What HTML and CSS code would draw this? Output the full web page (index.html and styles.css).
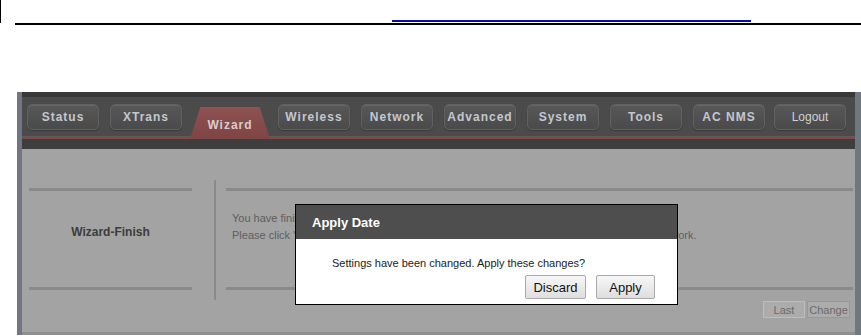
FILE: index.html
```html
<!DOCTYPE html>
<html lang="en">
<head>
  <meta charset="UTF-8">
  <title>Wizard - Finish</title>
  <link rel="stylesheet" href="styles.css">
</head>
<body>
<div class="top">
  <span class="top-link"></span>
</div>
<div class="top-rule"></div>

<div class="frame">
  <!-- NAV -->
  <div class="nav">
    <div class="tabs">
      <button class="tab">Status</button>
      <button class="tab">XTrans</button>
      <button class="tab active">Wizard</button>
      <button class="tab">Wireless</button>
      <button class="tab">Network</button>
      <button class="tab">Advanced</button>
      <button class="tab">System</button>
      <button class="tab">Tools</button>
      <button class="tab">AC NMS</button>
      <button class="tab logout">Logout</button>
    </div>
    <div class="nav-line"></div>
  </div>

  <!-- CONTENT -->
  <div class="content">
    <div class="side">Wizard-Finish</div>
    <div class="divider"></div>
    <div class="main">
      <div class="panel">
        <p>You have finished the wizard settings.</p>
        <p>Please click "Change" to save the settings, and the device will restart to connect to the network.</p>
      </div>
      <div class="actions">
        <button class="small-btn">Last</button>
        <button class="small-btn focus">Change</button>
      </div>
    </div>
  </div>
</div>

<!-- DIALOG -->
<div class="dialog">
  <div class="dialog-head">Apply Date</div>
  <div class="dialog-body">
    <p>Settings have been changed. Apply these changes?</p>
    <div class="dialog-btns">
      <button class="dlg-btn">Discard</button>
      <button class="dlg-btn">Apply</button>
    </div>
  </div>
</div>
</body>
</html>
```

FILE: styles.css
```css
*{box-sizing:border-box;margin:0;padding:0}
body{background:#fff;font-family:'Liberation Sans',Arial,sans-serif;width:861px;height:336px;overflow:hidden;position:relative}
button{font-family:inherit;cursor:pointer}

/* top strip */
.top{height:23px;border-left:1px solid #000;display:flex;align-items:flex-end}
.top-link{display:block;margin-left:391px;width:359px;height:0;border-bottom:2px solid #0b0bb4;margin-bottom:1px}
.top-rule{margin-left:15px;border-top:2px solid #000}

/* frame */
.frame{margin:67px 0 0 17px;width:844px;border-left:5px solid #6f7780;border-right:6px solid #6f7780}

/* nav */
.nav{background:#3e3e3e}
.tabs{height:44px;border-top:5px solid #383838;background:#4b4b4b;padding:7px 0 0 5px;display:flex;align-items:flex-start;gap:11px}
.tab{width:72px;height:26px;border:1px solid #616161;border-radius:5px;background:linear-gradient(#585858,#4a4a4a);color:#c3c7cf;font-size:12px;font-weight:bold;letter-spacing:1px;box-shadow:inset 0 1px 0 #666,0 1px 1px #3a3a3a}
.tab.active{align-self:flex-end;width:80px;height:32px;margin:0 -3px -3px;border:none;border-radius:0;position:relative;z-index:1;background:linear-gradient(#8f5252,#7f4444);clip-path:polygon(13% 0,87% 0,100% 100%,0 100%);color:#d6cdcd;padding-top:3px}
.tab.logout{font-weight:normal;letter-spacing:0;font-size:12px;color:#d0d2d6;margin-left:-2px}
.nav-line{height:13px;border-top:1px solid #5c5c5c;box-shadow:inset 0 2px 0 #874646}

/* content */
.content{background:#a3a3a3;height:186px;border-bottom:3px solid #8f8f8f;display:flex;align-items:flex-start;padding:39px 2px 0 7px}
.side{width:163px;height:102px;border-top:3px solid #8a8a8a;border-bottom:3px solid #8a8a8a;padding-top:34px;text-align:center;line-height:14px;font-size:12px;font-weight:bold;color:#3c3c3c}
.divider{width:2px;height:120px;margin:-8px 10px 0 22px;background:#8a8a8a}
.main{flex:1}
.panel{height:102px;border-top:3px solid #8a8a8a;border-bottom:3px solid #8a8a8a;padding:19px 6px 0;font-size:11px;color:#5e5e5e;line-height:17px}
.actions{display:flex;justify-content:flex-end;gap:2px;margin-top:11px;padding-right:3px}
.small-btn{width:42px;height:17px;border:1px solid #bdbdbd;background:#acacac;color:#6a6a6a;font-size:11px}
.small-btn.focus{width:43px;border-color:#8a99b4}

/* dialog */
.dialog{position:absolute;left:295px;top:204px;width:383px;height:101px;border:1px solid #000;background:#fff}
.dialog-head{height:34px;background:#4e4e4e;color:#fff;font-size:13px;font-weight:bold;padding:10px 0 0 16px}
.dialog-body{padding:18px 22px 0 36px;font-size:11px;color:#222}
.dialog-btns{display:flex;justify-content:flex-end;gap:10px;margin-top:6px}
.dlg-btn{height:24px;border:1px solid #aaa;border-radius:2px;background:linear-gradient(#f7f7f7,#dedede);color:#111;font-size:13px}
.dlg-btn:first-child{width:61px}
.dlg-btn:last-child{width:59px}
```
